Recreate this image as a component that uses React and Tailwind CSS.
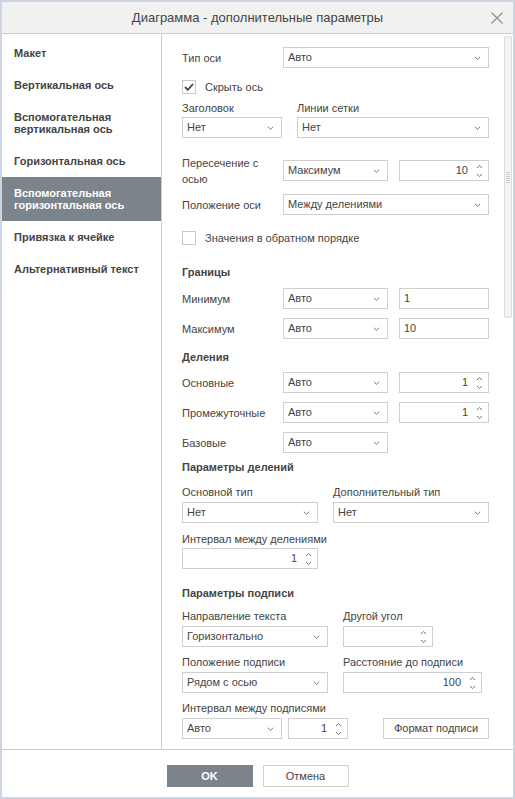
import React from "react";

const font = { fontFamily: '"Liberation Sans", Arial, sans-serif' };

function Chevron() {
  return (
    <svg className="absolute right-[7px] top-1/2 -translate-y-1/2" width="7" height="5" viewBox="0 0 7 5">
      <path d="M0.8 1.2 L3.5 3.8 L6.2 1.2" fill="none" stroke="#777" strokeWidth="1" />
    </svg>
  );
}

function Arrows() {
  return (
    <svg className="absolute right-[5px] top-1/2 -translate-y-1/2" width="7" height="15" viewBox="0 0 7 15">
      <path d="M1 4.5 L3.5 2 L6 4.5" fill="none" stroke="#777" strokeWidth="1" />
      <path d="M1 10.5 L3.5 13 L6 10.5" fill="none" stroke="#777" strokeWidth="1" />
    </svg>
  );
}

function Select({ w, value }) {
  return (
    <div className={`relative flex items-center h-[21px] border border-[#cfcfcf] bg-white pl-[4px] text-[11px] text-[#444] shrink-0 ${w}`}>
      {value}
      <Chevron />
    </div>
  );
}

function Spin({ w, value }) {
  return (
    <div className={`relative flex items-center justify-end h-[21px] border border-[#cfcfcf] bg-white pr-[20px] text-[11px] text-[#444] shrink-0 ${w}`}>
      {value}
      <Arrows />
    </div>
  );
}

function Input({ w, value }) {
  return (
    <div className={`flex items-center h-[21px] border border-[#cfcfcf] bg-white pl-[4px] text-[11px] text-[#444] shrink-0 ${w}`}>
      {value}
    </div>
  );
}

function Check({ checked, label, mt }) {
  return (
    <div className={`flex items-center h-[14px] ${mt}`}>
      <div className="w-[14px] h-[14px] border border-[#c8c8c8] bg-white flex items-center justify-center">
        {checked && (
          <svg width="10" height="8" viewBox="0 0 10 8">
            <path d="M1 4 L3.8 6.8 L9 1" fill="none" stroke="#444" strokeWidth="1.8" />
          </svg>
        )}
      </div>
      <span className="ml-[9px] text-[11px] text-[#444]">{label}</span>
    </div>
  );
}

function Row({ label, mt, children }) {
  return (
    <div className={`flex items-center h-[21px] ${mt}`}>
      <div className="w-[101px] shrink-0 text-[11px] leading-[16px] text-[#444]">{label}</div>
      <div className="flex items-center gap-[11px]">{children}</div>
    </div>
  );
}

function Head({ children, mt }) {
  return <div className={`h-[14px] leading-[14px] text-[11px] font-bold text-[#444] ${mt}`}>{children}</div>;
}

function Lbl({ children }) {
  return <div className="h-[14px] leading-[14px] text-[11px] text-[#444] whitespace-nowrap">{children}</div>;
}

const items = [
  ["Макет"],
  ["Вертикальная ось"],
  ["Вспомогательная", "вертикальная ось"],
  ["Горизонтальная ось"],
  ["Вспомогательная", "горизонтальная ось"],
  ["Привязка к ячейке"],
  ["Альтернативный текст"],
];

export default function App() {
  return (
    <div className="w-[515px] h-[799px] border-2 border-[#cbd6e2] bg-white flex flex-col" style={font}>
      <div className="relative h-[32px] shrink-0 bg-[#f1f1f1] border-b border-[#cbcbcb] flex items-center justify-center text-[13px] text-[#444]">
        Диаграмма - дополнительные параметры
        <svg className="absolute right-[10px] top-[10px]" width="12" height="12" viewBox="0 0 12 12">
          <path d="M0.5 0.5 L11.5 11.5 M11.5 0.5 L0.5 11.5" stroke="#8a8a8a" strokeWidth="1.1" />
        </svg>
      </div>
      <div className="flex flex-1 min-h-0">
        <div className="w-[160px] shrink-0 border-r border-[#cbcbcb] pt-[3px]">
          {items.map((it, i) => (
            <div
              key={i}
              className={`px-[12px] py-[10px] text-[11px] leading-[12px] font-bold ${i === 4 ? "bg-[#7c848b] text-white" : "text-[#444]"}`}
            >
              {it.map((l, j) => (
                <div key={j}>{l}</div>
              ))}
            </div>
          ))}
        </div>
        <div className="relative flex-1 pl-[20px] pt-[13px]">
          <Row label="Тип оси">
            <Select w="w-[206px]" value="Авто" />
          </Row>
          <Check checked label="Скрыть ось" mt="mt-[12px]" />
          <div className="flex gap-[15px] mt-[7px]">
            <div className="flex flex-col gap-[2px]">
              <Lbl>Заголовок</Lbl>
              <Select w="w-[100px]" value="Нет" />
            </div>
            <div className="flex flex-col gap-[2px]">
              <Lbl>Линии сетки</Lbl>
              <Select w="w-[192px]" value="Нет" />
            </div>
          </div>
          <Row label={<>Пересечение с<br />осью</>} mt="mt-[22px]">
            <Select w="w-[105px]" value="Максимум" />
            <Spin w="w-[90px]" value="10" />
          </Row>
          <Row label="Положение оси" mt="mt-[13px]">
            <Select w="w-[206px]" value="Между делениями" />
          </Row>
          <Check label="Значения в обратном порядке" mt="mt-[16px]" />
          <Head mt="mt-[20px]">Границы</Head>
          <Row label="Минимум" mt="mt-[9px]">
            <Select w="w-[105px]" value="Авто" />
            <Input w="w-[90px]" value="1" />
          </Row>
          <Row label="Максимум" mt="mt-[9px]">
            <Select w="w-[105px]" value="Авто" />
            <Input w="w-[90px]" value="10" />
          </Row>
          <Head mt="mt-[11px]">Деления</Head>
          <Row label="Основные" mt="mt-[8px]">
            <Select w="w-[105px]" value="Авто" />
            <Spin w="w-[90px]" value="1" />
          </Row>
          <Row label="Промежуточные" mt="mt-[9px]">
            <Select w="w-[105px]" value="Авто" />
            <Spin w="w-[90px]" value="1" />
          </Row>
          <Row label="Базовые" mt="mt-[9px]">
            <Select w="w-[105px]" value="Авто" />
          </Row>
          <Head mt="mt-[7px]">Параметры делений</Head>
          <div className="flex gap-[15px] mt-[11px]">
            <div className="flex flex-col gap-[3px]">
              <Lbl>Основной тип</Lbl>
              <Select w="w-[136px]" value="Нет" />
            </div>
            <div className="flex flex-col gap-[3px]">
              <Lbl>Дополнительный тип</Lbl>
              <Select w="w-[156px]" value="Нет" />
            </div>
          </div>
          <div className="flex flex-col gap-[2px] mt-[9px]">
            <Lbl>Интервал между делениями</Lbl>
            <Spin w="w-[136px]" value="1" />
          </div>
          <Head mt="mt-[17px]">Параметры подписи</Head>
          <div className="flex gap-[15px] mt-[9px]">
            <div className="flex flex-col gap-[3px]">
              <Lbl>Направление текста</Lbl>
              <Select w="w-[146px]" value="Горизонтально" />
            </div>
            <div className="flex flex-col gap-[3px]">
              <Lbl>Другой угол</Lbl>
              <Spin w="w-[90px]" value="" />
            </div>
          </div>
          <div className="flex gap-[15px] mt-[8px]">
            <div className="flex flex-col gap-[3px]">
              <Lbl>Положение подписи</Lbl>
              <Select w="w-[146px]" value="Рядом с осью" />
            </div>
            <div className="flex flex-col gap-[3px]">
              <Lbl>Расстояние до подписи</Lbl>
              <Spin w="w-[139px]" value="100" />
            </div>
          </div>
          <div className="flex flex-col gap-[3px] mt-[8px]">
            <Lbl>Интервал между подписями</Lbl>
            <div className="flex items-center">
              <Select w="w-[100px]" value="Авто" />
              <Spin w="w-[60px] ml-[6px]" value="1" />
              <div className="ml-[35px] w-[106px] h-[21px] border border-[#cfcfcf] bg-white flex items-center justify-center text-[11px] text-[#444]">
                Формат подписи
              </div>
            </div>
          </div>
          <div className="absolute right-[1px] top-[2px] w-[8px] h-[282px] rounded-[2px] border border-[#dcdcdc] bg-[#f4f4f4] flex flex-col items-center justify-center gap-[1px]">
            {[0, 1, 2, 3, 4, 5].map((k) => (
              <div key={k} className="w-[4px] h-[1px] bg-[#cfcfcf]" />
            ))}
          </div>
        </div>
      </div>
      <div className="h-[48px] shrink-0 border-t border-[#cbcbcb] flex justify-center gap-[10px] pt-[15px]">
        <div className="w-[86px] h-[22px] bg-[#7c848b] text-white font-bold text-[11px] flex items-center justify-center">
          OK
        </div>
        <div className="w-[86px] h-[22px] border border-[#cfcfcf] bg-white text-[#444] text-[11px] flex items-center justify-center">
          Отмена
        </div>
      </div>
    </div>
  );
}
